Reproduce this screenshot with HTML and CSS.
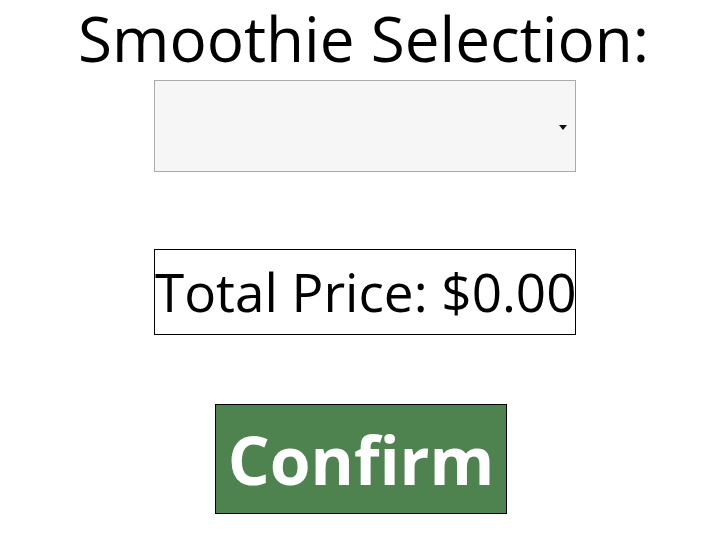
FILE: index.html
```html
<!DOCTYPE html>
<html lang="en">
<head>
  <meta charset="UTF-8" />
  <title>Smoothie Selection</title>
  <link rel="stylesheet" href="styles.css">
</head>
<body>
  <div class="order">
    <h1 class="title">Smoothie Selection:</h1>

    <div class="picker-wrap">
      <select class="picker" id="smoothie">
        <option value=""></option>
        <option value="berry">Berry Blast</option>
        <option value="mango">Mango Tango</option>
        <option value="green">Green Machine</option>
      </select>
    </div>

    <div class="total">Total Price: $<span id="price">0.00</span></div>

    <button class="confirm">Confirm</button>
  </div>
</body>
</html>
```

FILE: styles.css
```css
body {
  margin: 0;
  background: #fff;
  color: #000;
  font-family: "Open Sans", "Noto Sans", sans-serif;
}

.order {
  display: flex;
  flex-direction: column;
  align-items: center;
}

.title {
  margin: 0 0 4px 2px;
  font-size: 62px;
  font-weight: normal;
  line-height: 76px;
}

.picker-wrap {
  position: relative;
  width: 422px;
  height: 92px;
  margin-left: 5px;
}

/* little black arrow on the right */
.picker-wrap::after {
  content: "";
  position: absolute;
  right: 9px;
  top: 45px;
  border-left: 4px solid transparent;
  border-right: 4px solid transparent;
  border-top: 5px solid #111;
  pointer-events: none;
}

.picker {
  box-sizing: border-box;
  width: 100%;
  height: 100%;
  border: 1px solid #aaa;
  border-radius: 0;
  background: #f6f6f6;
  font-family: inherit;
  font-size: 20px;
  appearance: none;
  -webkit-appearance: none;
}

.total {
  box-sizing: border-box;
  width: 422px;
  height: 86px;
  margin-top: 77px;
  margin-left: 5px;
  border: 1px solid #000;
  font-size: 53px;
  line-height: 84px;
  white-space: nowrap;
}

.confirm {
  box-sizing: border-box;
  width: 292px;
  height: 110px;
  margin-top: 69px;
  margin-left: -3px;
  border: 1px solid #000;
  background: #4e824f;
  color: #fff;
  font-family: inherit;
  font-size: 66px;
  font-weight: bold;
}
```
